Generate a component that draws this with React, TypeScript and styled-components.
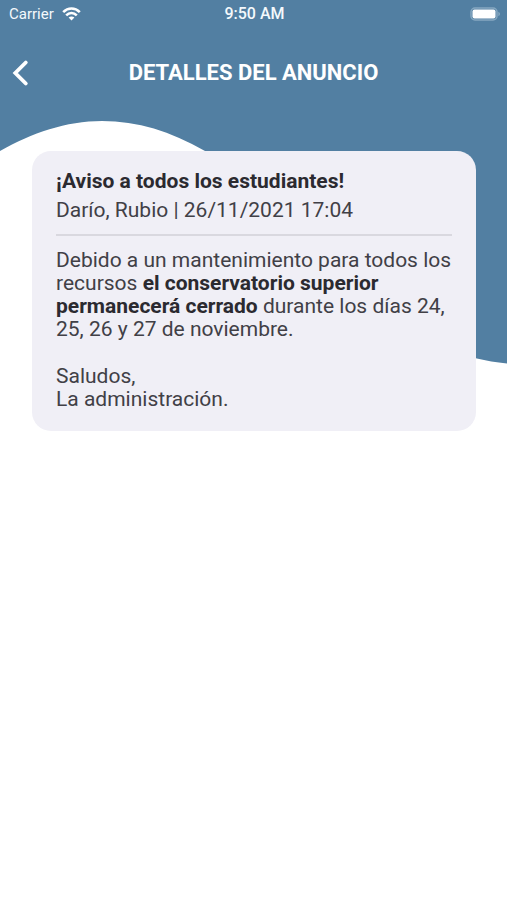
import React from "react";
import styled, { createGlobalStyle } from "styled-components";

const GlobalStyle = createGlobalStyle`
  * { box-sizing: border-box; }
  body {
    margin: 0;
    background: #ffffff;
    font-family: Roboto, sans-serif;
  }
`;

const Screen = styled.div`
  position: relative;
  min-height: 100vh;
`;

const Wave = styled.svg`
  position: absolute;
  top: 0;
  left: 0;
  z-index: -1;
  width: 100%;
  height: 364px;
`;

const StatusBar = styled.div`
  display: grid;
  grid-template-columns: 1fr auto 1fr;
  align-items: center;
  height: 28px;
  padding: 0 7px 0 9px;
  color: #f4f9fc;
  font-size: 15px;
  line-height: 16px;
`;

const Carrier = styled.div`
  display: flex;
  align-items: center;
  gap: 8px;
`;

const Clock = styled.time`
  font-weight: 500;
  font-size: 16px;
`;

const BatteryIcon = styled.svg`
  justify-self: end;
`;

const Header = styled.header`
  display: grid;
  grid-template-columns: 40px 1fr 40px;
  align-items: center;
  height: 90px;
`;

const BackButton = styled.button`
  display: flex;
  align-items: center;
  justify-content: center;
  width: 40px;
  height: 40px;
  padding: 0;
  border: 0;
  background: none;
  color: #ffffff;
  cursor: pointer;
`;

const Title = styled.h1`
  margin: 0;
  color: #ffffff;
  font-size: 22px;
  font-weight: 700;
  line-height: 24px;
  text-align: center;
`;

const Card = styled.article`
  margin: 33px 31px 0 32px;
  padding: 18px 24px 20px;
  border-radius: 19px;
  background: #f0eff6;
  color: #414046;
  font-size: 21px;
  line-height: 23px;
`;

const Subject = styled.h2`
  margin: 0;
  color: #2b2a30;
  font-size: 21px;
  font-weight: 700;
  line-height: 24px;
`;

const Byline = styled.p`
  margin: 6px 0 0;
  padding-bottom: 12px;
  border-bottom: 2px solid #d9d8df;
`;

const Message = styled.div`
  display: grid;
  gap: 24px;
  padding-top: 13px;

  p { margin: 0; }
  strong { color: #2b2a30; }
`;

export default function App() {
  return (
    <>
      <GlobalStyle />
      <Screen>
        <Wave viewBox="0 0 507 364" preserveAspectRatio="none" aria-hidden="true">
          <path
            d="M0 0H507V363.500C410 354 370 290 310 232C270 190 240 169 205 151C170 131 138 121 102 121C66 121 32 133 0 151Z"
            fill="#527fa2"
          />
        </Wave>
        <StatusBar>
          <Carrier>
            <span>Carrier</span>
            <svg width="19" height="14" viewBox="0 0 19 14" aria-label="Wi-Fi">
              <g fill="none" stroke="#fff" strokeWidth="2.600">
                <path d="M1.200 5.100C6 .300 13 .300 17.800 5.100" />
                <path d="M4.200 8.400C7.300 5.400 11.700 5.400 14.800 8.400" />
              </g>
              <path d="M9.500 13.500L6.600 10.500C8.300 9 10.700 9 12.400 10.500Z" fill="#fff" />
            </svg>
          </Carrier>
          <Clock>9:50 AM</Clock>
          <BatteryIcon width="30" height="14" viewBox="0 0 30 14" aria-label="Battery">
            <rect x="1" y="1" width="26" height="12" rx="4" fill="none" stroke="#86a8c1" strokeWidth="1.500" />
            <rect x="2.500" y="2.500" width="23" height="9" rx="2" fill="#fff" />
            <path d="M28.300 4.800C30.500 5.800 30.500 8.200 28.300 9.200Z" fill="#86a8c1" />
          </BatteryIcon>
        </StatusBar>
        <Header>
          <BackButton type="button" aria-label="Volver">
            <svg width="18" height="28" viewBox="0 0 18 28" aria-hidden="true">
              <path
                d="M14.800 3.500L4.300 14L14.800 24.500"
                fill="none"
                stroke="currentColor"
                strokeWidth="3.800"
                strokeLinecap="round"
                strokeLinejoin="miter"
              />
            </svg>
          </BackButton>
          <Title>DETALLES DEL ANUNCIO</Title>
        </Header>
        <Card>
          <Subject>¡Aviso a todos los estudiantes!</Subject>
          <Byline>Darío, Rubio | 26/11/2021 17:04</Byline>
          <Message>
            <p>
              Debido a un mantenimiento para todos los recursos{" "}
              <strong>el conservatorio superior permanecerá cerrado</strong> durante
              los días 24, 25, 26 y 27 de noviembre.
            </p>
            <p>
              Saludos,
              <br />
              La administración.
            </p>
          </Message>
        </Card>
      </Screen>
    </>
  );
}
